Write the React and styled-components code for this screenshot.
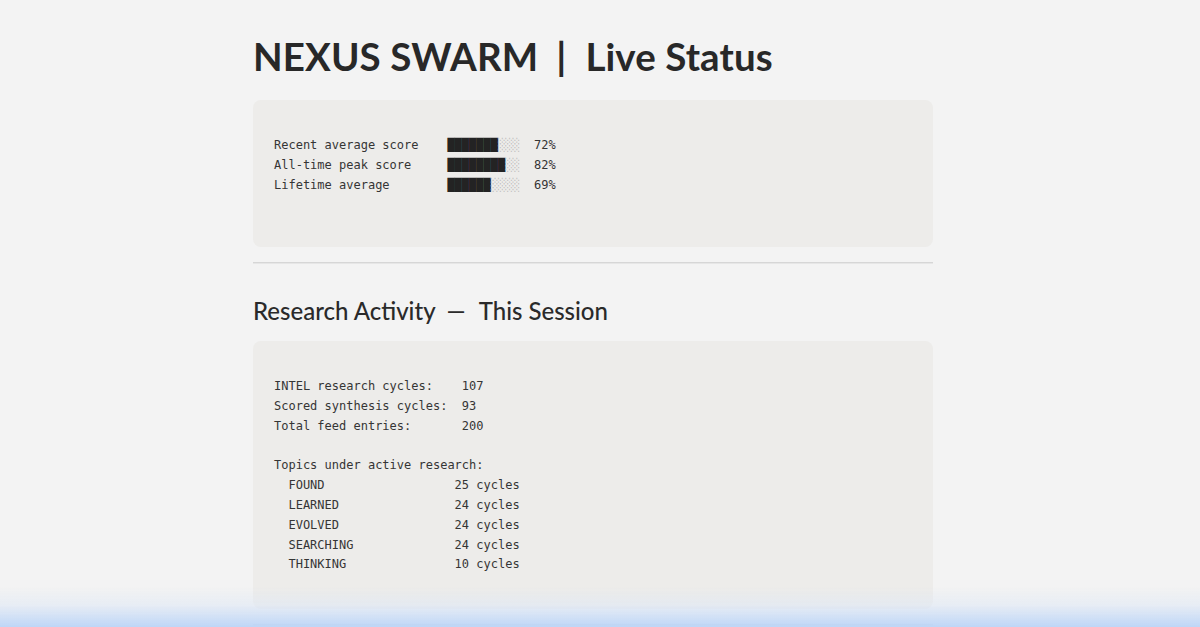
import React from "react";
import styled, { createGlobalStyle } from "styled-components";

const GlobalStyle = createGlobalStyle`
  html, body {
    margin: 0;
    padding: 0;
    background: #f3f3f3;
  }
  body {
    font-family: "Lato", "Noto Sans", sans-serif;
    color: #2b2b2b;
    height: 627px;
    overflow: hidden;
  }
`;

const Page = styled.main`
  width: 680px;
  padding: 30px 0 0 253px;
`;

const Title = styled.h1`
  margin: 0 0 18px;
  font-family: "Lato", sans-serif;
  font-weight: 700;
  font-size: 38.5px;
  line-height: 52px;
  letter-spacing: 0.1px;
  color: #282828;
`;

const Sep = styled.span`
  font-weight: 700;
  margin: 0 19px 0 18px;
`;

const SectionTitle = styled.h2`
  margin: 31px 0 14px;
  font-family: "Lato", sans-serif;
  font-weight: 500;
  font-size: 24px;
  line-height: 32px;
  color: #2a2a2a;
`;

const Dash = styled.span`
  margin: 0 13px 0 11px;
`;

const Card = styled.pre`
  margin: 0;
  padding: ${(p) => (p.$tight ? "36px 21px 32px" : "36px 21px 34px")};
  background: #edecea;
  border-radius: 8px;
  font-family: "DejaVu Sans Mono", "Liberation Mono", monospace;
  font-size: 12px;
  line-height: 19.8px;
  color: #353535;
  white-space: pre;
`;

const Rule = styled.hr`
  margin: 15px 0 0;
  border: 0;
  border-top: 1px solid #d6d6d6;
  border-bottom: 1px solid #e6e6e6;
`;

const Bar = styled.span`
  color: #232323;
`;

const Rest = styled.span`
  color: #bdbdbd;
`;

const BottomFade = styled.div`
  position: fixed;
  left: 0;
  right: 0;
  bottom: 0;
  height: 40px;
  pointer-events: none;
  background: linear-gradient(
    to bottom,
    rgba(243, 243, 243, 0) 0%,
    rgba(222, 232, 246, 0.55) 45%,
    rgba(187, 212, 247, 0.95) 100%
  );
`;

const scores = [
  { label: "Recent average score", pct: 72 },
  { label: "All-time peak score", pct: 82 },
  { label: "Lifetime average", pct: 69 },
];

const topics = [
  ["FOUND", 25],
  ["LEARNED", 24],
  ["EVOLVED", 24],
  ["SEARCHING", 24],
  ["THINKING", 10],
];

const pad = (s, n) => s + " ".repeat(Math.max(0, n - s.length));

function ScoreLine({ label, pct }) {
  const full = Math.floor(pct / 10);
  return (
    <>
      {pad(label, 24)}
      <Bar>{"█".repeat(full)}</Bar>
      <Rest>{"░".repeat(10 - full)}</Rest>
      {"  " + pct + "%\n"}
    </>
  );
}

export default function App() {
  const activity =
    pad("INTEL research cycles:", 26) + "107\n" +
    pad("Scored synthesis cycles:", 26) + "93\n" +
    pad("Total feed entries:", 26) + "200\n\n" +
    "Topics under active research:\n" +
    topics.map(([t, n]) => pad("  " + t, 25) + n + " cycles").join("\n");

  return (
    <>
      <GlobalStyle />
      <Page>
        <Title>
          NEXUS SWARM<Sep>|</Sep>Live Status
        </Title>
        <Card $tight>
          {scores.map((s) => (
            <ScoreLine key={s.label} {...s} />
          ))}
          {"\n"}
        </Card>
        <Rule />
        <SectionTitle>
          Research Activity<Dash>—</Dash>This Session
        </SectionTitle>
        <Card>{activity}</Card>
        <Rule />
      </Page>
      <BottomFade />
    </>
  );
}
